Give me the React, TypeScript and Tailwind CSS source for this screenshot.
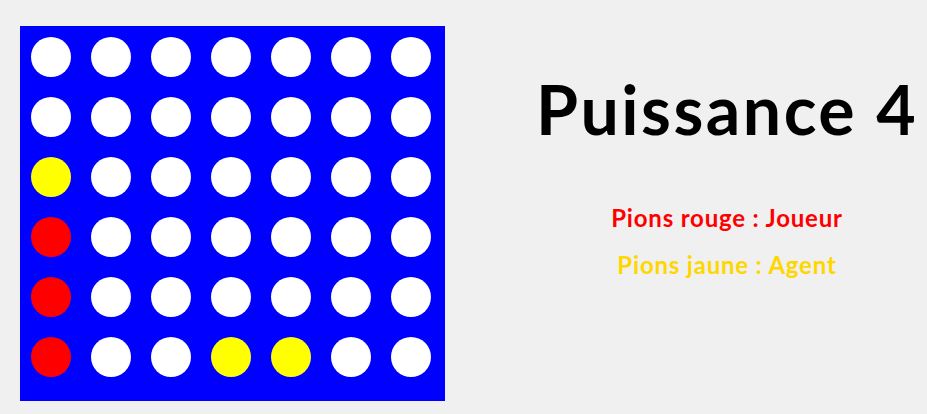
import React from "react";

const board: string[] = [
  "WWWWWWW",
  "WWWWWWW",
  "YWWWWWW",
  "RWWWWWW",
  "RWWWWWW",
  "RWWYYWW",
];

function Cell({ c }: { c: string }) {
  const cls =
    c === "R" ? "bg-[#ff0000]" : c === "Y" ? "bg-[#ffff00]" : "bg-white";
  return <div className={`w-10 h-10 rounded-full ${cls}`} />;
}

export default function App() {
  return (
    <div
      className="w-[927px] h-[414px] bg-[#f0f0f0] flex overflow-hidden"
      style={{ fontFamily: "Lato, 'Open Sans', sans-serif" }}
    >
      <div className="ml-[20px] mt-[26px] w-[425px] h-[375px] bg-[#0000ff] pl-[11px] pt-[11px]">
        <div className="grid grid-cols-[repeat(7,40px)] gap-5">
          {board.flatMap((row, r) =>
            row.split("").map((c, i) => <Cell key={`${r}-${i}`} c={c} />)
          )}
        </div>
      </div>
      <div className="ml-[82px] w-[400px] flex flex-col items-center">
        <h1 className="mt-[69px] text-[68px] leading-[80px] font-bold tracking-[2.5px] text-black whitespace-nowrap">
          Puissance 4
        </h1>
        <p className="mt-[57px] text-[24px] leading-[24px] font-bold tracking-[0.8px] text-[#ff0000] whitespace-nowrap">
          Pions rouge : Joueur
        </p>
        <p className="mt-[23px] text-[24px] leading-[24px] font-bold tracking-[0.8px] text-[#ffd700] whitespace-nowrap">
          Pions jaune : Agent
        </p>
      </div>
    </div>
  );
}
